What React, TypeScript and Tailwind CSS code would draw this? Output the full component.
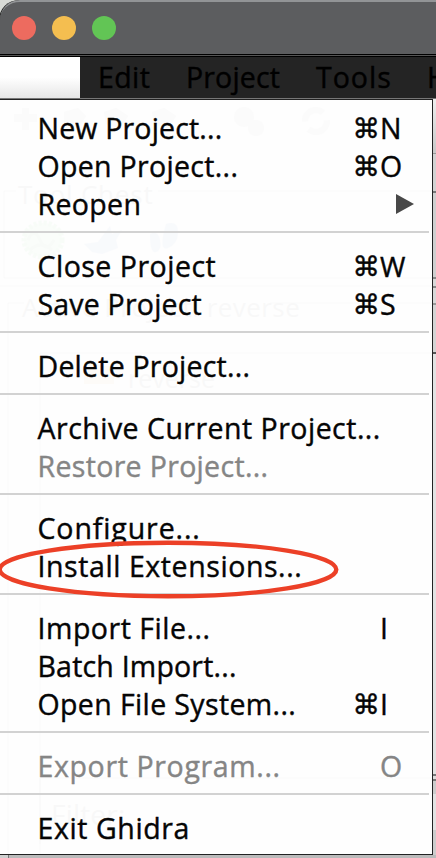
type Item = { label: string; spacing: string; mod?: boolean; hotkey?: string; disabled?: boolean; submenu?: boolean };

const groups: Item[][] = [
  [
    { label: "New Project...", spacing: "tracking-[0.18px]", mod: true, hotkey: "N" },
    { label: "Open Project...", spacing: "tracking-[0.32px]", mod: true, hotkey: "O" },
    { label: "Reopen", spacing: "tracking-[0.35px]", submenu: true },
  ],
  [
    { label: "Close Project", spacing: "tracking-[0.5px]", mod: true, hotkey: "W" },
    { label: "Save Project", spacing: "tracking-[0.2px]", mod: true, hotkey: "S" },
  ],
  [{ label: "Delete Project...", spacing: "tracking-[0.22px]" }],
  [
    { label: "Archive Current Project...", spacing: "tracking-[0.48px]" },
    { label: "Restore Project...", spacing: "tracking-[0.33px]", disabled: true },
  ],
  [
    { label: "Configure...", spacing: "tracking-[0.9px]" },
    { label: "Install Extensions...", spacing: "tracking-[0.58px]" },
  ],
  [
    { label: "Import File...", spacing: "tracking-[0.52px]", hotkey: "I" },
    { label: "Batch Import...", spacing: "tracking-[0.2px]" },
    { label: "Open File System...", spacing: "tracking-[0.38px]", mod: true, hotkey: "I" },
  ],
  [{ label: "Export Program...", spacing: "tracking-[0.64px]", hotkey: "O", disabled: true }],
  [{ label: "Exit Ghidra", spacing: "tracking-[0.6px]" }],
];

function Row({ item }: { item: Item }) {
  return (
    <div
      className={`flex h-[38px] items-center whitespace-pre pl-[37.5px] leading-[37px] [-webkit-text-stroke:0.4px_currentColor] ${
        item.disabled ? "text-[#858585]" : "text-[#050505]"
      }`}
    >
      <span className={`w-[315px] shrink-0 ${item.spacing}`}>{item.label}</span>
      {item.submenu ? (
        <svg className="ml-[43.5px]" width="18" height="20" viewBox="0 0 18 20">
          <path d="M0 0L18 10L0 20Z" fill="#484848" />
        </svg>
      ) : (
        <>
          <span className="w-[27.5px] shrink-0 pt-px font-['DejaVu_Sans'] text-[27.5px]">{item.mod ? "⌘" : ""}</span>
          <span className={item.hotkey === "W" ? "text-[27.5px]" : ""}>{item.hotkey}</span>
        </>
      )}
    </div>
  );
}

/* Main window content that shows faintly through the translucent menu. */
function WindowBehind() {
  return (
    <div className="pointer-events-none absolute inset-0 overflow-hidden text-[26px] text-black opacity-[0.02]">
      <span className="absolute left-[18px] top-[75px] tracking-[0.8px]">Tool Chest</span>
      <span className="absolute left-[22px] top-[188px] tracking-[0.45px]">Active Project: reverse</span>
      <span className="absolute left-[128px] top-[260px] text-[25px]">reverse</span>
      <span className="absolute left-[51px] top-[693px] text-[28px] tracking-[0.2px]">Filter:</span>
      <svg className="absolute left-0 top-0" width="432" height="754" viewBox="0 100 432 754" fill="none" stroke="#000">
        <path
          strokeOpacity="0.6"
          d="M16 191H4V278H432M158 191H432M0 286H432M24 303H8V854M270 303H432M40 353H432M40 353V854M40 778H432M40 778V844"
        />
        <g opacity="0.5">
          <g fill="#000" stroke="none">
            <circle cx="244" cy="117" r="10" />
            <circle cx="256" cy="128" r="8" />
            <path d="M14 114h8v-6h7v6h8v8h-8v8h-7v-8h-8zM64 112l14-4 8 8-8 12-14-4zM104 112l12-4 12 8-8 12-14-4zM152 112l12-4 12 8-8 12-14-4z" />
          </g>
          <circle cx="316" cy="121" r="11" strokeWidth="6" strokeDasharray="25 9" />
        </g>
        <ellipse cx="43" cy="240" rx="19" ry="17" fill="#00d000" fillOpacity="0.6" stroke="#00d000" strokeWidth="5" strokeDasharray="3 2" />
        <path d="M28 240q6-14 12 0t14 0M30 250q10-10 22 0" stroke="#008000" strokeWidth="3" />
        <path d="M84 244l14-2 12-16 2 8 10-4-6 10 2 8-16 6-10-2z" fill="#2060d0" stroke="none" />
        <path d="M150 234q8-4 10 6t-4 12-6-18zM166 224q12-4 12 8t-10 16-2-24z" fill="#2060d0" stroke="none" />
        <path d="M84 362h12l4 4h14v18H84z" fill="#e0a000" stroke="none" />
      </svg>
    </div>
  );
}

export default function App() {
  return (
    <div className="relative h-[858px] w-[436px] overflow-hidden bg-[#d4d4d4] font-['Open_Sans','Noto_Sans',sans-serif] text-[28.5px] font-medium">
      <div className="bg-[#d8dad6]">
        <header className="flex h-[54px] items-center gap-4 rounded-tl-[20px] border-t-2 border-[#929496] bg-[#5c5d5f] pl-3 shadow-[-1px_0_0_#222]">
          <i className="h-6 w-6 rounded-full bg-[#ed6b5f]" />
          <i className="h-6 w-6 rounded-full bg-[#f4be50]" />
          <i className="h-6 w-6 rounded-full bg-[#62c555]" />
        </header>
      </div>
      <div className="h-[3px] border-y border-black bg-[#555]" />
      <nav className="flex h-[41px] bg-[#242424] leading-[41px] text-black [-webkit-text-stroke:0.4px_currentColor]">
        <div className="w-20 shrink-0 bg-linear-to-b from-white from-50% to-[#e6e6e6]" />
        <span className="ml-[18px] w-[88px] shrink-0 tracking-[0.4px]">Edit</span>
        <span className="w-[130px] shrink-0 tracking-[0.15px]">Project</span>
        <span className="w-[111px] shrink-0 tracking-[1px]">Tools</span>
        <span className="shrink-0">Help</span>
      </nav>
      <div className="h-px bg-[#777]" />
      <div className="flex h-[756px]">
        <main className="relative w-[433px] shrink-0 border-y border-r border-[#222] bg-[#fefefe] pt-[9px]">
          <WindowBehind />
          <div className="relative">
            {groups.map((group, i) => (
              <section key={i}>
                {i > 0 && (
                  <div className="h-6 pt-2">
                    <div className="h-[2px] w-[429px] bg-[#d2d2d2]" />
                  </div>
                )}
                {group.map((item) => (
                  <Row key={item.label} item={item} />
                ))}
              </section>
            ))}
          </div>
        </main>
        <aside className="flex w-[3px] flex-col">
          <div className="h-[54px] bg-linear-to-b from-[#eee] to-[#c8c8c8]" />
          <div className="h-[38px] border-t border-[#999] bg-[#d2d2d2]" />
          <div className="h-[86px] border-t-2 border-[#777] bg-[#cfcfcf]" />
          <div className="h-[9px] border-t-2 border-[#888] bg-[#d8d8d8]" />
          <div className="h-[17px] border-t-2 border-[#888] bg-[#d8d8d8]" />
          <div className="h-[49px] border-t-2 border-[#999] bg-[#d4d4d4]" />
          <div className="h-[422px] border-t-2 border-[#555] bg-[#e2e2e2]" />
          <div className="h-[7px] border-y-2 border-[#777] bg-[#ddd]" />
          <div className="h-[13px] bg-[#ccc]" />
          <div className="h-[36px] bg-[#e2e2e2]" />
          <div className="flex-1 bg-[#ccc]" />
        </aside>
      </div>
      <footer className="flex h-[3px] bg-[#bbb]">
        <div className="w-[9px] border-r border-[#777] bg-[#d0d0d0]" />
      </footer>
      <svg className="pointer-events-none absolute left-0 top-[536px]" width="350" height="68" viewBox="0 536 350 68">
        <ellipse cx="168" cy="569.5" rx="168.3" ry="26.8" fill="none" stroke="#ec4027" strokeWidth="4.4" />
      </svg>
    </div>
  );
}
